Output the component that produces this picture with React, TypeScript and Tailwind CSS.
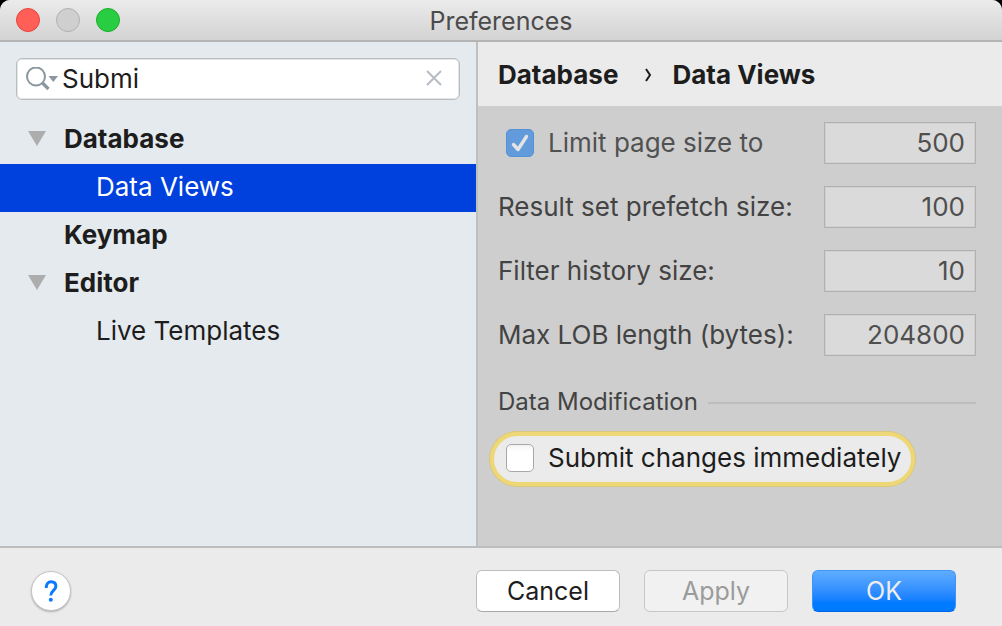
import { useState } from 'react';
import clsx from 'clsx';

type TreeItem = { label: string; level: 0 | 1; expandable?: boolean };

const TREE: TreeItem[] = [
  { label: 'Database', level: 0, expandable: true },
  { label: 'Data Views', level: 1 },
  { label: 'Keymap', level: 0 },
  { label: 'Editor', level: 0, expandable: true },
  { label: 'Live Templates', level: 1 },
];

const NUMBER_FIELDS = [
  { id: 'prefetch', label: 'Result set prefetch size:', value: '100' },
  { id: 'history', label: 'Filter history size:', value: '10' },
  { id: 'lob', label: 'Max LOB length (bytes):', value: '204800' },
];

const numberInput =
  'h-[42px] w-[152px] shrink-0 border border-[#b0b0b0] bg-[#dadada] pr-[10px] pb-[2px] text-right text-[#4f4f4f] shadow-[inset_0_0_0_1px_#d0d0d0] outline-none';

function TitleBar() {
  return (
    <header className="relative flex h-[42px] shrink-0 items-center justify-center border-b-2 border-[#b4b4b4] bg-linear-to-b from-[#ebebeb] to-[#d3d3d3]">
      <div className="absolute top-2 left-4 flex gap-4">
        <button aria-label="Close" className="size-6 rounded-full border border-[#e2463f] bg-[#ff5f57]" />
        <button aria-label="Minimize" className="size-6 rounded-full border border-[#b0b0b0] bg-[#cfcfcf]" />
        <button aria-label="Zoom" className="size-6 rounded-full border border-[#1dad2b] bg-[#28cd41]" />
      </div>
      <h1 className="pt-[2px] text-[25px] text-[#4b4b4b]">Preferences</h1>
    </header>
  );
}

function SearchBox() {
  const [query, setQuery] = useState('Submi');

  return (
    <div className="mx-4 mt-4 flex h-[42px] items-center rounded-md border border-[#b9bdc0] bg-white pr-4 pl-[9px] shadow-[inset_0_0_0_1px_#e3e5e7]">
      <svg className="h-6 w-8 shrink-0" viewBox="0 0 32 24" fill="none" aria-hidden>
        <circle cx="10" cy="9.5" r="9" stroke="#8b979f" strokeWidth="2" />
        <path d="M16 15.500l6.500 6.500" stroke="#8b979f" strokeWidth="3.200" />
        <path d="M22.500 9h9.500l-4.700 6z" fill="#8b979f" />
      </svg>
      <input
        aria-label="Search preferences"
        value={query}
        onChange={(e) => setQuery(e.target.value)}
        className="ml-1 min-w-0 flex-1 bg-transparent outline-none"
      />
      <button aria-label="Clear" onClick={() => setQuery('')} className="pb-[2px]">
        <svg className="size-[18px]" viewBox="0 0 18 18" aria-hidden>
          <path d="M2 2l14 14M16 2L2 16" stroke="#b6bdc3" strokeWidth="2" />
        </svg>
      </button>
    </div>
  );
}

function Sidebar() {
  const [selected, setSelected] = useState('Data Views');

  return (
    <aside className="w-[478px] shrink-0 border-r-2 border-[#bfbfbf] bg-[#e5eaee]">
      <SearchBox />
      <ul className="mt-4">
        {TREE.map((item) => (
          <li key={item.label}>
            <button
              onClick={() => setSelected(item.label)}
              className={clsx(
                'flex h-12 w-full items-center pb-[2px] text-left',
                item.level === 0 ? 'pl-7 font-bold' : 'pl-24',
                item.label === selected && 'bg-[#0040dd] text-white',
              )}
            >
              {item.level === 0 && (
                <svg className="mr-[18px] h-4 w-[18px]" viewBox="0 0 18 16" aria-hidden>
                  {item.expandable && <path d="M0 0h18L9 15z" fill="#adadad" />}
                </svg>
              )}
              {item.label}
            </button>
          </li>
        ))}
      </ul>
    </aside>
  );
}

function Breadcrumb() {
  return (
    <nav className="flex h-16 items-center bg-[#ebebeb] px-5 pt-[2px] font-bold" aria-label="Breadcrumb">
      <a href="#database">Database</a>
      <svg className="mr-5 ml-[26px] h-[14px] w-2" viewBox="0 0 8 14" fill="none" aria-hidden>
        <path d="M2 1l4 6-4 6" stroke="#1d1d1d" strokeWidth="2" />
      </svg>
      <a href="#data-views">Data Views</a>
    </nav>
  );
}

function DataViews() {
  return (
    <div className="flex flex-1 flex-col pt-4 pr-[26px] pb-10 pl-5">
      <div className="flex flex-col gap-[22px] text-[#434343]">
        <div className="flex items-center justify-between">
          <label className="flex items-center pl-2 text-[#515151]">
            <span className="mr-[14px] grid">
              <input
                type="checkbox"
                defaultChecked
                className="peer col-start-1 row-start-1 size-7 appearance-none rounded-[5px] border border-[#aaaaaa] bg-[#dadada] checked:border-[#5592d4] checked:bg-[#629bdc]"
              />
              <svg
                className="pointer-events-none invisible col-start-1 row-start-1 size-7 peer-checked:visible"
                viewBox="0 0 28 28"
                fill="none"
                aria-hidden
              >
                <path d="M7.500 15.500l4.500 5L20.500 7.500" stroke="#e4e4e4" strokeWidth="3.400" strokeLinecap="round" strokeLinejoin="round" />
              </svg>
            </span>
            Limit page size to
          </label>
          <input aria-label="Page size" defaultValue="500" className={numberInput} />
        </div>

        {NUMBER_FIELDS.map((f) => (
          <div key={f.id} className="flex items-center justify-between">
            <label htmlFor={f.id}>{f.label}</label>
            <input id={f.id} defaultValue={f.value} className={numberInput} />
          </div>
        ))}
      </div>

      <div className="mt-[30px] flex h-8 items-center gap-[10px] text-[#434343]">
        <h2 className="text-[24px]">Data Modification</h2>
        <div className="mt-[2px] h-[2px] flex-1 bg-[#bdbdbd]" />
      </div>

      {/* Search hit, spotlighted */}
      <label className="mt-[14px] -ml-2 flex h-[54px] items-center self-start rounded-full border-4 border-[#eed777] bg-[#ebebeb] pr-[10px] pb-[2px] pl-3 shadow-[0_0_0_1px_#d9c87c]">
        <input
          type="checkbox"
          className="mr-[14px] size-7 shrink-0 appearance-none rounded-[5px] border border-[#a8a8a8] bg-linear-to-b from-[#f3f3f3] to-white to-25% checked:bg-[#0a7aff]"
        />
        Submit changes immediately
      </label>
    </div>
  );
}

function Footer() {
  return (
    <footer className="flex h-20 shrink-0 items-center gap-6 border-t-2 border-[#bdbdbd] bg-[#ebebeb] pt-2 pr-[46px] pl-[31px] text-[25px]">
      <button
        aria-label="Help"
        className="mr-auto flex size-10 items-center justify-center rounded-full border border-[#c4c4c4] bg-white shadow-[0_1px_2px_#00000040]"
      >
        <svg className="h-[22px] w-[14px]" viewBox="0 0 14 22" fill="none" aria-hidden>
          <path
            d="M2.200 8C2.200 4 4.200 1.800 7 1.800c2.900 0 4.900 1.700 4.900 4.500 0 4-5.100 4.400-5.100 9.200"
            stroke="#0a7aff"
            strokeWidth="3"
          />
          <circle cx="6.800" cy="19.800" r="2" fill="#0a7aff" />
        </svg>
      </button>
      <button className="h-[42px] w-36 rounded-md border border-[#bdbdbd] border-b-[#a9a9a9] bg-white">Cancel</button>
      <button className="h-[42px] w-36 rounded-md border border-[#c6c6c6] bg-[#f1f1f1] text-[#9b9b9b]">Apply</button>
      <button className="h-[42px] w-36 rounded-md border border-[#3f95f5] border-b-[#0064e6] bg-linear-to-b from-[#5fadff] to-[#007aff] to-80% text-[#ededed]">
        OK
      </button>
    </footer>
  );
}

export default function App() {
  return (
    <div className="bg-black">
      <div className="flex min-h-screen flex-col overflow-hidden rounded-t-[10px] bg-[#cecece] font-['Inter','Liberation_Sans',sans-serif] text-[26px] leading-8 text-[#1d1d1d]">
        <TitleBar />
        <main className="flex flex-1">
          <Sidebar />
          <section className="flex min-w-0 flex-1 flex-col bg-[#cecece]">
            <Breadcrumb />
            <DataViews />
          </section>
        </main>
        <Footer />
      </div>
    </div>
  );
}
